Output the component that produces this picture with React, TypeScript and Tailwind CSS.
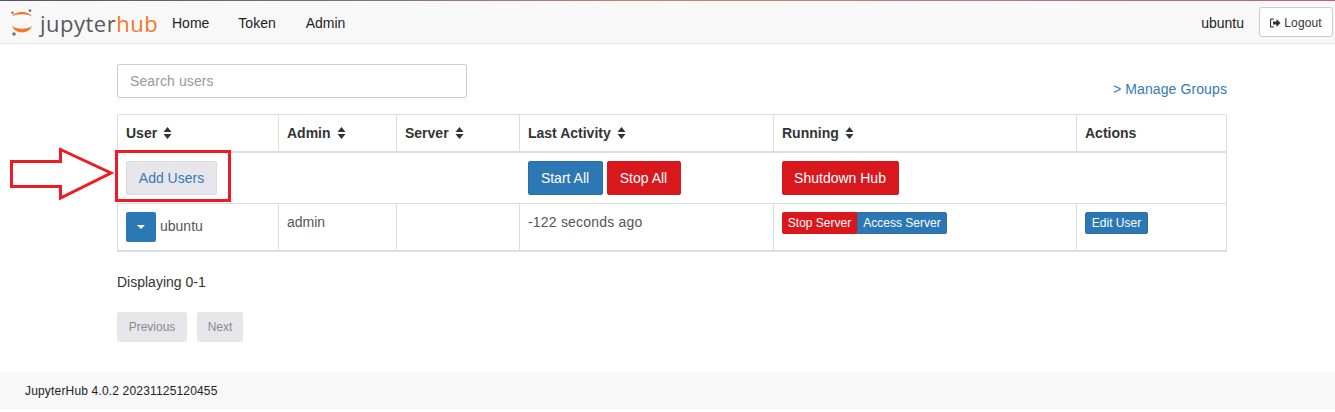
import React from "react";

const SortIcon = () => (
  <svg width="9" height="12" viewBox="0 0 9 12" className="ml-[6px] inline-block align-[-1px] text-[#333]" fill="currentColor">
    <path d="M4.5 0 L8.5 5 L0.5 5 Z" />
    <path d="M0.5 7 L8.5 7 L4.5 12 Z" />
  </svg>
);

const Logo = () => (
  <div className="flex w-[147px] items-center">
    <svg width="24" height="28" viewBox="0 0 24 28" className="shrink-0">
      <path d="M1 8.5 C4 2.5 18 2.5 21 8.5 C16.5 5.5 5.5 5.5 1 8.5 Z" fill="#f37726" />
      <path d="M1 18 C5.5 21.5 16.5 21.5 21 18 C18 26.5 4 26.5 1 18 Z" fill="#f37726" />
      <circle cx="19" cy="2.7" r="1.4" fill="#767677" />
      <circle cx="1.5" cy="4.7" r="1.2" fill="#767677" />
      <circle cx="3" cy="26" r="1.8" fill="#767677" />
    </svg>
    <span className="ml-[5px] mt-[1px] text-[22px] leading-none tracking-[0.5px] text-[#58595b] font-['Open_Sans',sans-serif]">jupyter</span>
    <span className="mt-[1px] text-[22px] leading-none tracking-[0.5px] text-[#f37726] font-['Open_Sans',sans-serif]">hub</span>
  </div>
);

const Th = ({ label, className, sortable = true }: { label: string; className: string; sortable?: boolean }) => (
  <th className={`border border-[#ddd] border-b-[2px] px-2 py-[8px] text-left font-bold text-[#333] ${className}`}>
    {label}
    {sortable && <SortIcon />}
  </th>
);

const App = () => {
  return (
    <div className="relative h-[412px] overflow-hidden bg-white text-[14px] leading-[20px] text-[#333] font-['Liberation_Sans',Arial,sans-serif]">
      <div className="h-px bg-gradient-to-r from-[#55506a] via-[#b98a70] to-[#c0607a]" />
      <nav className="flex h-[43px] items-center border-b border-[#e7e7e7] bg-[#f8f8f8] pl-[11px] pr-[2px]">
        <Logo />
        <div className="ml-[14px] mt-[1px] flex text-[#222]">
          <span>Home</span>
          <span className="ml-[29px]">Token</span>
          <span className="ml-[30px]">Admin</span>
        </div>
        <span className="ml-auto mt-[1px] text-[#222]">ubuntu</span>
        <button className="ml-[15px] flex h-[30px] w-[74px] items-center justify-center rounded-[3px] border border-[#ccc] bg-white pt-[1px] text-[12px] tracking-[0.1px] text-[#333]">
          <svg width="11" height="10" viewBox="0 0 11 10" className="mr-[3px]" fill="#333">
            <path d="M4 1H1.5A1 1 0 0 0 .5 2v6a1 1 0 0 0 1 1H4" fill="none" stroke="#333" strokeWidth="1.2" />
            <path d="M3 3.5h3.5V1L10.5 5 6.5 9V6.5H3Z" />
          </svg>
          Logout
        </button>
      </nav>

      <main className="mx-[117px] w-[1110px]">
        <div className="flex items-start justify-between pt-5">
          <div className="flex h-[34px] w-[350px] items-center rounded-[2px] border border-[#ccc] px-3 tracking-[0.1px] text-[#999]">Search users</div>
          <a className="mt-[15px] tracking-[0.1px] text-[#337ab7]">&gt; Manage Groups</a>
        </div>

        <table className="mt-[15px] w-[1110px] table-fixed border-collapse">
          <thead>
            <tr>
              <Th label="User" className="w-[161px]" />
              <Th label="Admin" className="w-[118px]" />
              <Th label="Server" className="w-[123px]" />
              <Th label="Last Activity" className="w-[254px]" />
              <Th label="Running" className="w-[303px]" />
              <Th label="Actions" className="" sortable={false} />
            </tr>
          </thead>
          <tbody>
            <tr className="h-[51px]">
              <td className="border-y border-l border-[#ddd] px-2 py-2">
                <button className="h-[34px] w-[91px] rounded-[2px] border border-[#d9d9de] bg-[#e7e7eb] text-[#337ab7]">Add Users</button>
              </td>
              <td className="border-y border-[#ddd]" />
              <td className="border-y border-[#ddd]" />
              <td className="border-y border-[#ddd] px-2 py-2">
                <div className="flex gap-1">
                  <button className="h-[34px] w-[75px] rounded-[2px] border border-[#2e6da4] bg-[#2c78b5] text-white">Start All</button>
                  <button className="h-[34px] w-[74px] rounded-[2px] border border-[#d7191c] bg-[#d9181d] text-white">Stop All</button>
                </div>
              </td>
              <td className="border-y border-[#ddd] px-2 py-2">
                <button className="h-[34px] w-[117px] rounded-[2px] border border-[#d7191c] bg-[#d9181d] text-white">Shutdown Hub</button>
              </td>
              <td className="border-y border-r border-[#ddd]" />
            </tr>
            <tr className="h-[47px] text-[#555]">
              <td className="border border-b-[2px] border-[#ddd] px-2 py-2">
                <div className="flex items-center">
                  <button className="flex h-[30px] w-[30px] items-center justify-center rounded-[2px] bg-[#2c78b5]">
                    <span className="h-0 w-0 border-x-[4px] border-t-[4px] border-x-transparent border-t-white" />
                  </button>
                  <span className="ml-[4px] mt-[-3px]">ubuntu</span>
                </div>
              </td>
              <td className="border border-b-[2px] border-[#ddd] px-2 pt-2 pb-4 align-top">admin</td>
              <td className="border border-b-[2px] border-[#ddd]" />
              <td className="border border-b-[2px] border-[#ddd] px-2 pt-2 align-top tracking-[0.2px]">-122 seconds ago</td>
              <td className="border border-b-[2px] border-[#ddd] px-2 pt-2 align-top">
                <div className="flex">
                  <button className="h-[22px] w-[75px] rounded-l-[2px] bg-[#d9181d] text-[12px] text-white">Stop Server</button>
                  <button className="h-[22px] w-[90px] rounded-r-[2px] border border-[#2e6da4] bg-[#2c78b5] text-[12px] text-white">Access Server</button>
                </div>
              </td>
              <td className="border border-b-[2px] border-[#ddd] px-2 pt-2 align-top">
                <button className="h-[22px] w-[63px] rounded-[2px] border border-[#2e6da4] bg-[#2c78b5] text-[12px] text-white">Edit User</button>
              </td>
            </tr>
          </tbody>
        </table>

        <p className="mt-[20px]">Displaying 0-1</p>
        <div className="mt-[20px] flex gap-[10px] text-[12px] text-[#8a8a8a]">
          <div className="flex h-[30px] w-[70px] items-center justify-center rounded-[2px] bg-[#e7e7eb]">Previous</div>
          <div className="flex h-[30px] w-[46px] items-center justify-center rounded-[2px] bg-[#e7e7eb]">Next</div>
        </div>
      </main>

      <footer className="absolute left-0 right-0 top-[372px] flex h-[37px] items-center bg-[#f8f8f8] pl-[25px] text-[12px] tracking-[0.17px] text-[#222]">
        JupyterHub 4.0.2 20231125120455
      </footer>

      {/* annotation drawn over the screenshot */}
      <div className="absolute left-[115px] top-[150px] h-[52px] w-[116px] border-[3px] border-[#ed1c24]" />
      <svg className="absolute left-[9px] top-[147px]" width="106" height="54" viewBox="0 0 106 54" fill="white" stroke="#ed1c24" strokeWidth="3">
        <path d="M2.5 14.5 H51.5 V2.5 L102 26 L51.5 51 V39.5 H2.5 Z" />
      </svg>
    </div>
  );
};

export default App;
